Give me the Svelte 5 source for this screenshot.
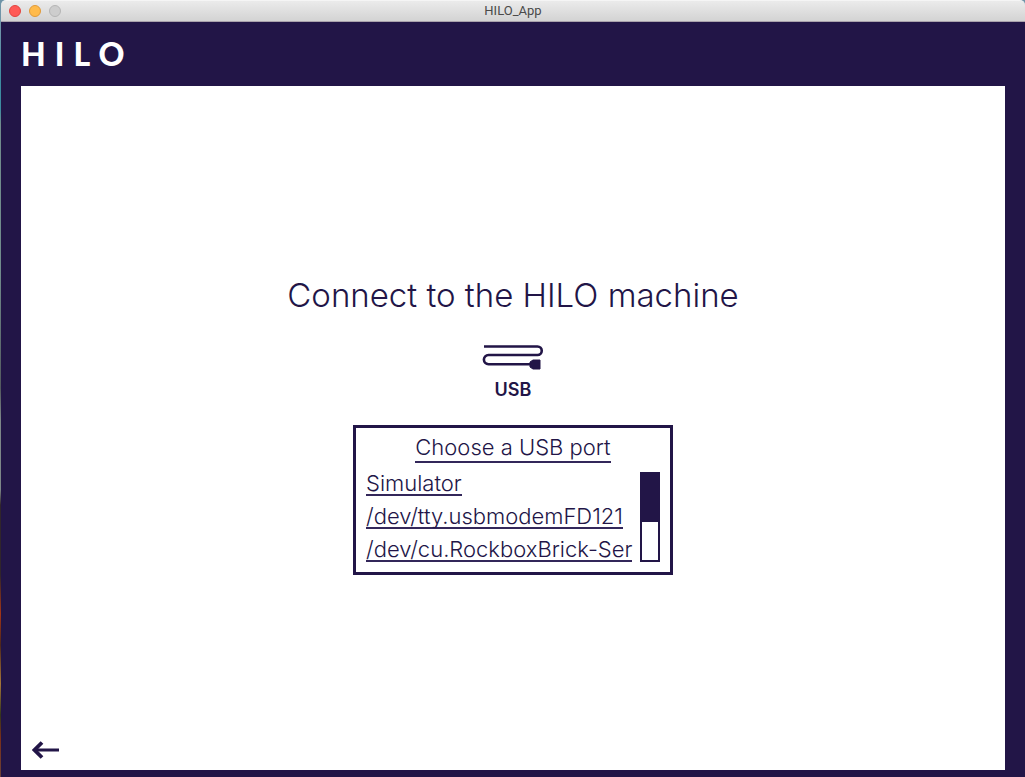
<script>
  const ports = ['Simulator', '/dev/tty.usbmodemFD121', '/dev/cu.RockboxBrick-Ser'];
</script>

<div class="window">
  <header class="titlebar">
    <div class="lights">
      <button class="light close" aria-label="Close"></button>
      <button class="light minimise" aria-label="Minimise"></button>
      <button class="light" aria-label="Zoom" disabled></button>
    </div>
    <span class="title">HILO_App</span>
  </header>

  <div class="app">
    <div class="brand">HILO</div>

    <main class="page">
      <section class="connect">
        <h1>Connect to the HILO machine</h1>

        <svg class="cable" viewBox="0 0 62 28" aria-hidden="true">
          <path d="M2 3.5H55.5A4.2 4.2 0 0 1 55.5 12H6.5A4.6 4.6 0 0 0 6.5 21.2H48" fill="none" stroke="currentColor" stroke-width="2.6" />
          <path d="M48 19L51 17H58V26H51L48 24Z" fill="currentColor" stroke="currentColor" stroke-width="1" stroke-linejoin="round" />
        </svg>
        <div class="kind">USB</div>

        <div class="chooser">
          <h2>Choose a USB port</h2>
          <div class="list">
            <ul>
              {#each ports as port}
                <li><button class="port">{port}</button></li>
              {/each}
            </ul>
            <div class="track"><div class="thumb"></div></div>
          </div>
        </div>
      </section>

      <button class="back" aria-label="Back">
        <svg viewBox="0 0 28 18" aria-hidden="true">
          <path d="M27 9H3" fill="none" stroke="currentColor" stroke-width="3" />
          <path d="M10 1.500L2.500 9L10 16.500" fill="none" stroke="currentColor" stroke-width="3.800" />
        </svg>
      </button>
    </main>
  </div>
</div>

<style>
  :global(body) {
    margin: 0;
    background: #718b99;
  }

  .window {
    box-sizing: border-box;
    min-height: 100vh;
    display: flex;
    flex-direction: column;
    padding-left: 1px;
    background: linear-gradient(#6f94a8 0 4%, #3d8ba0 10% 14%, #718b8c 16% 35%, #53595e 50%, #7d8688 54% 63%, #30252b 65% 74%, #a33516 79%, #4c261c 83%, #a57639 88%, #33351c 92%, #7a2e19 95%, #694238);
    color: #221547;
    font-family: Inter, sans-serif;
  }

  button {
    padding: 0;
    border: 0;
    background: none;
    color: inherit;
    font: inherit;
    cursor: pointer;
  }

  .titlebar {
    box-sizing: border-box;
    height: 22px;
    display: grid;
    grid-template-columns: 1fr auto 1fr;
    align-items: center;
    padding: 0 8px;
    border-top: 1px solid #f5f5f5;
    border-bottom: 1px solid #aaa2ac;
    border-radius: 5px 5px 0 0;
    background: linear-gradient(#ebebeb, #d3d3d3);
  }

  .lights {
    display: flex;
    gap: 8px;
  }

  .light {
    box-sizing: border-box;
    width: 12px;
    height: 12px;
    border: 1px solid #b5b5b5;
    border-radius: 50%;
    background: #cdcdcd;
  }

  .close {
    border-color: #e2443f;
    background: #ff5a56;
  }

  .minimise {
    border-color: #e09a3a;
    background: #ffbb4c;
  }

  .title {
    color: #4a4a4a;
    font-size: 13px;
    line-height: 20px;
    font-family: Roboto, sans-serif;
  }

  .app {
    flex: 1;
    display: flex;
    flex-direction: column;
    padding: 0 20px 7px;
    background: #221547;
  }

  .brand {
    height: 64px;
    color: #fff;
    font-family: Lato, sans-serif;
    font-size: 32px;
    font-weight: 900;
    line-height: 64px;
    letter-spacing: 9px;
  }

  .page {
    flex: 1;
    display: grid;
    background: #fff;
  }

  .connect {
    grid-area: 1 / 1;
    place-self: center;
    display: flex;
    flex-direction: column;
    align-items: center;
  }

  h1 {
    margin: 0 0 34px;
    font-size: 33px;
    font-weight: 300;
    line-height: 28px;
  }

  .cable {
    width: 62px;
    height: 28px;
  }

  .kind {
    margin: 7px 0 23px;
    font-size: 18px;
    font-weight: 600;
    line-height: 24px;
  }

  .chooser {
    box-sizing: border-box;
    width: 320px;
    padding: 6px 10px 10px;
    border: 3px solid #221547;
    display: flex;
    flex-direction: column;
    align-items: center;
  }

  h2 {
    margin: 0 0 9px;
    border-bottom: 2px solid #33275a;
    font-size: 22px;
    font-weight: 300;
    line-height: 27px;
  }

  .list {
    align-self: stretch;
    display: flex;
    justify-content: space-between;
  }

  ul {
    margin: 0;
    padding: 0;
    list-style: none;
    display: flex;
    flex-direction: column;
    gap: 9px;
  }

  li {
    display: flex;
  }

  .port {
    border-bottom: 2px solid #33275a;
    font-size: 22px;
    font-weight: 300;
    line-height: 22px;
    white-space: nowrap;
  }

  .track {
    box-sizing: border-box;
    width: 20px;
    border: 2px solid #221547;
  }

  .thumb {
    height: 56%;
    background: #221547;
  }

  .back {
    grid-area: 1 / 1;
    place-self: end start;
    margin: 0 0 11px 11px;
    display: flex;
  }

  .back svg {
    width: 28px;
    height: 18px;
  }
</style>
